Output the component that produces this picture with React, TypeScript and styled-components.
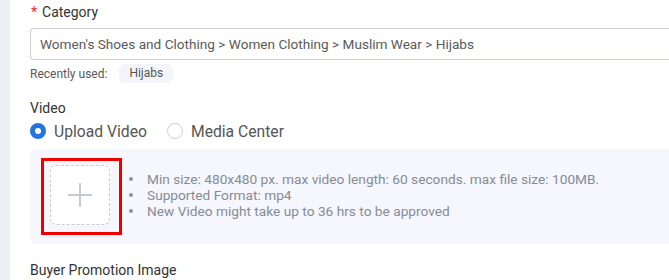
import styled, { createGlobalStyle } from "styled-components";

const GlobalStyle = createGlobalStyle`
  html, body {
    margin: 0;
    padding: 0;
    background: #ffffff;
    overflow: hidden;
  }
  body {
    font-family: Roboto, "Liberation Sans", Arial, sans-serif;
  }
`;

const Page = styled.div`
  display: flex;
  width: 669px;
  height: 280px;
`;

const SideStrip = styled.div`
  width: 10px;
  flex-shrink: 0;
  background: #eeeff4;
`;

const Content = styled.div`
  flex: 1;
  padding: 2px 0 0 20px;
  overflow: hidden;
`;

const Label = styled.div`
  font-size: 14px;
  line-height: 20px;
  color: #333333;
  display: flex;
  align-items: center;
`;

const Required = styled.span`
  color: #ee2c2c;
  font-size: 14px;
  margin: 0 5px 0 1px;
`;

const Input = styled.div`
  margin-top: 6px;
  height: 32px;
  box-sizing: border-box;
  border: 1px solid #cfd0d6;
  border-right: none;
  border-radius: 4px 0 0 4px;
  padding: 0 9px;
  display: flex;
  align-items: center;
  font-size: 13.6px;
  color: #5a5a5a;
  white-space: nowrap;
`;

const RecentRow = styled.div`
  display: flex;
  align-items: center;
  margin-top: 4px;
  font-size: 12px;
  color: #595959;
`;

const Chip = styled.span`
  margin-left: 12px;
  padding: 0 10px;
  height: 19px;
  line-height: 19px;
  border-radius: 6px;
  background: #f3f5fb;
  color: #555555;
`;

const Section = styled.div`
  margin-top: 15px;
`;

const RadioGroup = styled.div`
  display: flex;
  align-items: center;
  margin-top: 3px;
  height: 20px;
`;

const RadioItem = styled.label`
  display: flex;
  align-items: center;
  margin-right: 20px;
  font-size: 15.7px;
  color: #555555;
`;

const RadioCircle = styled.span<{ $checked?: boolean }>`
  width: 16px;
  height: 16px;
  box-sizing: border-box;
  border-radius: 50%;
  margin-right: 8px;
  border: ${(p) => (p.$checked ? "none" : "1px solid #cdd0d6")};
  background: ${(p) => (p.$checked ? "#2673dd" : "#fff")};
  display: flex;
  align-items: center;
  justify-content: center;
  &::after {
    content: "";
    display: ${(p) => (p.$checked ? "block" : "none")};
    width: 6px;
    height: 6px;
    border-radius: 50%;
    background: #fff;
  }
`;

const UploadPanel = styled.div`
  margin-top: 8px;
  height: 95px;
  background: #f5f7fc;
  border-radius: 6px 0 0 6px;
  display: flex;
  align-items: center;
  padding-left: 11px;
`;

const Highlight = styled.div`
  border: 3px solid #ee0000;
  padding: 4px 9px 7px 6px;
`;

const DropBox = styled.div`
  width: 60px;
  height: 60px;
  box-sizing: border-box;
  border: 1px dashed #c9ccd3;
  border-radius: 6px;
  background: #ffffff;
  display: flex;
  align-items: center;
  justify-content: center;
`;

const Tips = styled.ul`
  margin: -4px 0 0 0;
  padding: 0 0 0 7px;
  list-style: none;
  font-size: 13.7px;
  line-height: 16px;
  color: #878b96;
`;

const Tip = styled.li`
  display: flex;
  align-items: center;
  &::before {
    content: "";
    width: 4px;
    height: 4px;
    border-radius: 50%;
    background: #90949e;
    margin-right: 14px;
    flex-shrink: 0;
  }
`;

const BottomLabel = styled(Label)`
  margin-top: 16px;
`;

const PlusIcon = () => (
  <svg width="26" height="26" viewBox="0 0 26 26">
    <rect x="12" y="1" width="2" height="24" fill="#c7cad3" />
    <rect x="1" y="12" width="24" height="2" fill="#c7cad3" />
  </svg>
);

const App = () => {
  return (
    <>
      <GlobalStyle />
      <Page>
        <SideStrip />
        <Content>
          <Label>
            <Required>*</Required>Category
          </Label>
          <Input>
            Women's Shoes and Clothing &gt; Women Clothing &gt; Muslim Wear &gt; Hijabs
          </Input>
          <RecentRow>
            Recently used:
            <Chip>Hijabs</Chip>
          </RecentRow>

          <Section>
            <Label>Video</Label>
            <RadioGroup>
              <RadioItem>
                <RadioCircle $checked />
                Upload Video
              </RadioItem>
              <RadioItem>
                <RadioCircle />
                Media Center
              </RadioItem>
            </RadioGroup>
            <UploadPanel>
              <Highlight>
                <DropBox>
                  <PlusIcon />
                </DropBox>
              </Highlight>
              <Tips>
                <Tip>Min size: 480x480 px. max video length: 60 seconds. max file size: 100MB.</Tip>
                <Tip>Supported Format: mp4</Tip>
                <Tip>New Video might take up to 36 hrs to be approved</Tip>
              </Tips>
            </UploadPanel>
          </Section>

          <BottomLabel>Buyer Promotion Image</BottomLabel>
        </Content>
      </Page>
    </>
  );
};

export default App;
